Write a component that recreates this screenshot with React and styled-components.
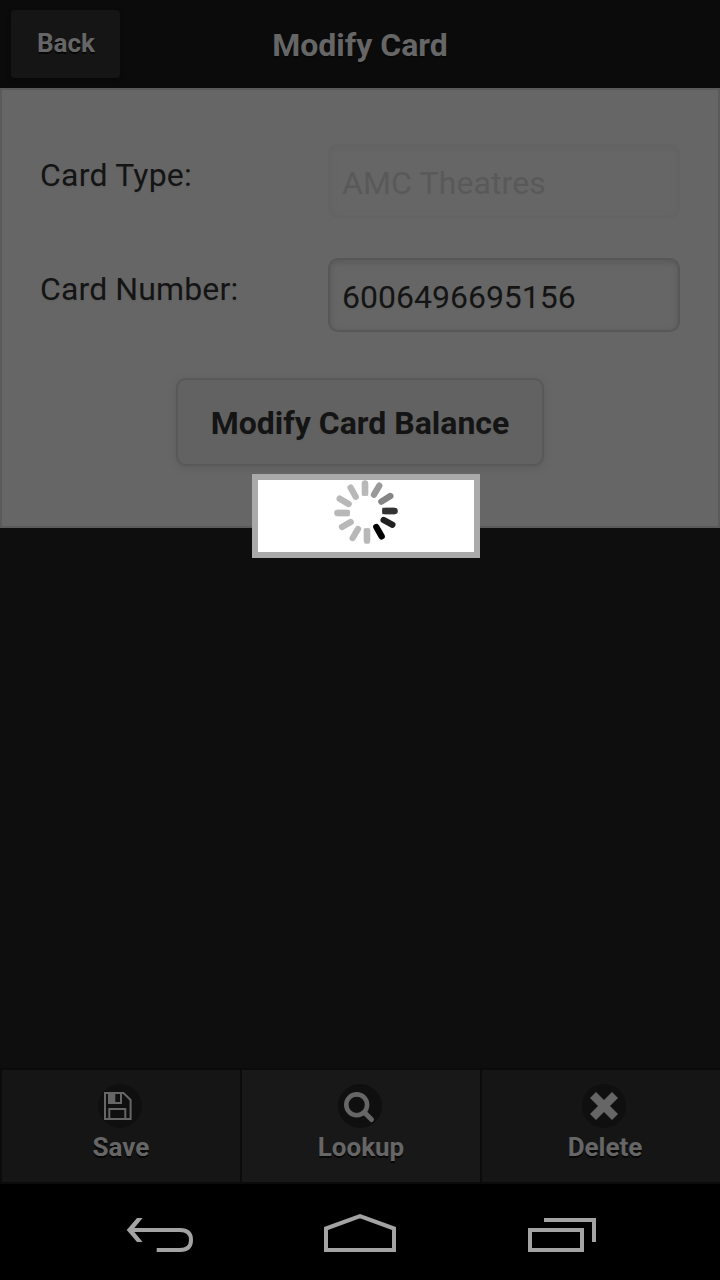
import React from "react";
import styled, { createGlobalStyle } from "styled-components";

const GlobalStyle = createGlobalStyle`
  *, *::before, *::after { box-sizing: border-box; }
  html, body { margin: 0; background: #000; }
  body { font-family: Roboto, "Liberation Sans", sans-serif; }
  button, input { font-family: inherit; margin: 0; }
`;

const Screen = styled.div`
  position: relative;
  display: flex;
  flex-direction: column;
  width: 720px;
  height: 1280px;
  overflow: hidden;
  background: #0e0e0e;
`;

const Header = styled.header`
  display: grid;
  grid-template-columns: 109px 1fr 109px;
  align-items: start;
  height: 88px;
  padding: 10px 11px 0;
  background: #0b0b0b;
`;

const BackButton = styled.button`
  height: 68px;
  padding: 0 0 2px 1px;
  border: 0;
  border-radius: 4px;
  background: #151515;
  color: #666;
  font-size: 26px;
  font-weight: 700;
  text-shadow: 0 2px 0 #070707;
  box-shadow: 0 2px 4px #080808;
`;

const Title = styled.h1`
  margin: 0;
  line-height: 70px;
  font-size: 32px;
  font-weight: 700;
  text-align: center;
  color: #666;
  text-shadow: 0 2px 0 #070707;
`;

const Panel = styled.main`
  display: flex;
  flex-direction: column;
  align-items: center;
  height: 440px;
  padding: 54px 38px 0;
  border: 2px solid #5a5a5a;
  background: #666;
`;

const Field = styled.div`
  display: grid;
  grid-template-columns: 288px 352px;
  width: 100%;
  margin-bottom: 40px;
`;

const Label = styled.label`
  padding-top: 12px;
  line-height: 38px;
  font-size: 32px;
  color: #141414;
  letter-spacing: ${(p) => p.$spacing};
  text-shadow: 0 2px 0 #626262;
`;

const TextInput = styled.input`
  width: 352px;
  height: 74px;
  padding: 3px 12px 0;
  border: 2px solid #575757;
  border-radius: 10px;
  outline: 0;
  background: transparent;
  font-size: 32px;
  letter-spacing: ${(p) => p.$spacing};
  color: #141414;
  box-shadow: inset 0 2px 6px #585858;
  text-shadow: 0 2px 0 #626262;

  &:disabled {
    border-color: #636363;
    color: #595959;
    box-shadow: inset 0 2px 6px #636363;
    text-shadow: none;
  }
`;

const BalanceButton = styled.button`
  width: 368px;
  height: 88px;
  margin-top: 6px;
  padding: 1px 0 0;
  border: 2px solid #595959;
  border-radius: 10px;
  background: #626262;
  color: #141414;
  font-size: 32px;
  font-weight: 700;
  text-shadow: 0 2px 0 #5f5f5f;
  box-shadow: 0 2px 6px #5c5c5c;
`;

const Spacer = styled.div`
  flex: 1;
`;

const Toolbar = styled.footer`
  display: grid;
  grid-template-columns: 240px 240px 240px;
  height: 116px;
  border-bottom: 2px solid #0b0b0b;
`;

const ToolButton = styled.button`
  display: flex;
  flex-direction: column;
  align-items: center;
  padding: 14px 0 0 ${(p) => p.$inset || "0px"};
  border: 0 solid #0b0b0b;
  border-width: 2px 0 0 2px;
  background: ${(p) => p.$tone || "#151515"};
`;

const IconDisc = styled.span`
  display: flex;
  width: 44px;
  height: 44px;
  margin-left: -2px;
  border-radius: 50%;
  background: #0f0f0f;
`;

const ToolLabel = styled.span`
  margin-top: 4px;
  line-height: 30px;
  font-size: 26px;
  font-weight: 700;
  color: #666;
  text-shadow: 0 2px 0 #070707;
`;

const SystemBar = styled.nav`
  display: flex;
  align-items: flex-start;
  gap: 124px;
  height: 96px;
  padding: 28px 0 0 124px;
  background: #000;
`;

const SystemIcon = styled.svg`
  display: block;
  flex: none;
  fill: none;
  stroke: #a3a3a3;
  stroke-width: 4;
`;

const Loader = styled.div`
  position: absolute;
  left: 252px;
  top: 474px;
  display: flex;
  width: 228px;
  height: 84px;
  padding-left: 76px;
  border: 6px solid #aaa;
  background: #fff;
`;

const spokes = [
  [375, 70, 375, 98, "#b8b8b8"],
  [418, 77, 402, 104, "#999"],
  [451, 108, 424, 125, "#858585"],
  [464, 153, 436, 153, "#333"],
  [457, 194, 431, 180, "#202020"],
  [425, 229, 409, 201, "#000"],
  [381, 242, 381, 214, "#b8b8b8"],
  [338, 234, 354, 207, "#b8b8b8"],
  [306, 201, 332, 186, "#b8b8b8"],
  [292, 159, 320, 159, "#b8b8b8"],
  [299, 116, 326, 132, "#b8b8b8"],
  [332, 83, 347, 110, "#b8b8b8"],
];

const isStraight = ([x1, y1, x2, y2]) => x1 === x2 || y1 === y2;

const Spinner = () => (
  <svg width="64" height="64" viewBox="282 60 192 192" strokeWidth="19">
    {spokes.map((spoke, i) => {
      const [x1, y1, x2, y2, color] = spoke;
      const endX = x2 + Math.sign(x2 - x1) * 9;
      const endY = y2 + Math.sign(y2 - y1) * 9;
      return (
        <g key={i} stroke={color}>
          <line x1={x1} y1={y1} x2={x2} y2={y2} strokeLinecap="round" />
          {isStraight(spoke) && <line x1={x1} y1={y1} x2={endX} y2={endY} />}
        </g>
      );
    })}
  </svg>
);

const SaveIcon = () => (
  <svg width="44" height="44" fill="none" stroke="#666" strokeWidth="2">
    <path d="M7 9H25.5L32.6 16V35H7Z" />
    <path d="M11 9V19H23V9M11.3 35V25H27.3V35" />
    <path d="M11 9H17.3V19H11Z" fill="#666" stroke="none" />
  </svg>
);

const SearchIcon = () => (
  <svg width="44" height="44" fill="none" stroke="#666">
    <circle cx="18.7" cy="20.8" r="10.4" strokeWidth="4.6" />
    <path d="M26.5 28.5L33.5 35.5" strokeWidth="5" strokeLinecap="round" />
  </svg>
);

const DeleteIcon = () => (
  <svg width="44" height="44" fill="#666">
    <path d="M14 8L22 16L30 8L36 14L28 22L36 30L30 36L22 28L14 36L8 30L16 22L8 14Z" />
  </svg>
);

export default function App() {
  return (
    <Screen>
      <GlobalStyle />
      <Header>
        <BackButton>Back</BackButton>
        <Title>Modify Card</Title>
      </Header>
      <Panel>
        <Field>
          <Label htmlFor="type" $spacing="0.2px">Card Type:</Label>
          <TextInput id="type" disabled defaultValue="AMC Theatres" $spacing="0.12px" />
        </Field>
        <Field>
          <Label htmlFor="number" $spacing="0.12px">Card Number:</Label>
          <TextInput id="number" defaultValue="6006496695156" $spacing="0" />
        </Field>
        <BalanceButton>Modify Card Balance</BalanceButton>
      </Panel>
      <Spacer />
      <Toolbar>
        <ToolButton>
          <IconDisc><SaveIcon /></IconDisc>
          <ToolLabel>Save</ToolLabel>
        </ToolButton>
        <ToolButton $tone="#181818">
          <IconDisc><SearchIcon /></IconDisc>
          <ToolLabel>Lookup</ToolLabel>
        </ToolButton>
        <ToolButton $inset="8px">
          <IconDisc><DeleteIcon /></IconDisc>
          <ToolLabel>Delete</ToolLabel>
        </ToolButton>
      </Toolbar>
      <SystemBar>
        <SystemIcon width="72" height="44" viewBox="124 1212 72 44">
          <path d="M129 1230H180Q191 1230 191 1240Q191 1250 180 1250H156.7" />
          <path d="M137 1218H142.6L132.7 1230L142.6 1242H137L126.7 1230Z" fill="#a3a3a3" stroke="none" />
        </SystemIcon>
        <SystemIcon width="80" height="44" viewBox="320 1212 80 44">
          <path d="M326 1250V1228.5L360 1216.2L394 1228.5V1250Z" />
        </SystemIcon>
        <SystemIcon width="76" height="44" viewBox="524 1212 76 44">
          <path d="M530 1230H582V1250H530Z M544 1220H594V1242" />
        </SystemIcon>
      </SystemBar>
      <Loader role="status" aria-label="Loading">
        <Spinner />
      </Loader>
    </Screen>
  );
}
